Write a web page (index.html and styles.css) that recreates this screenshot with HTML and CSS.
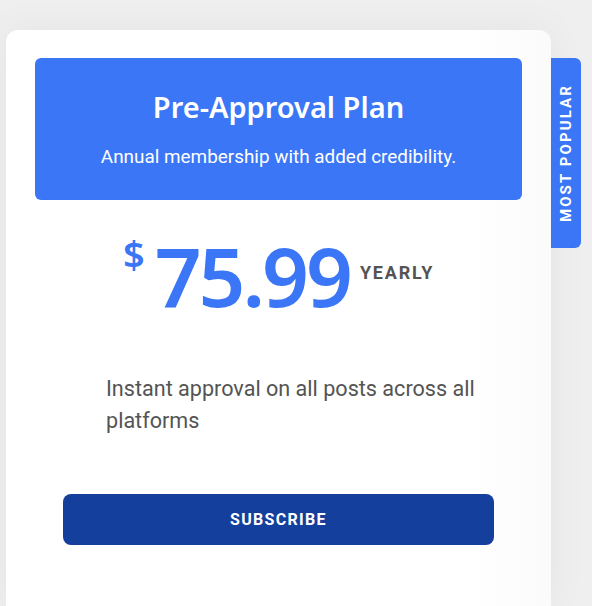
FILE: index.html
```html
<!DOCTYPE html>
<html lang="en">
<head>
<meta charset="utf-8">
<title>Pricing</title>
<link rel="stylesheet" href="styles.css">
</head>
<body>
<div class="page">
  <div class="card">
    <div class="ribbon"><span>MOST POPULAR</span></div>
    <div class="head">
      <h2 class="title">Pre-Approval Plan</h2>
      <p class="sub">Annual membership with added credibility.</p>
    </div>
    <div class="price">
      <span class="cur">$</span>
      <span class="amount">75.99</span>
      <span class="per">YEARLY</span>
    </div>
    <p class="desc">Instant approval on all posts across all platforms</p>
    <button class="btn">SUBSCRIBE</button>
  </div>
</div>
</body>
</html>
```

FILE: styles.css
```css
html, body {
  margin: 0;
  padding: 0;
  background: #efefef;
  height: 100%;
  overflow: hidden;
}
.page {
  padding: 30px 0 0 6px;
}
.card {
  position: relative;
  width: 545px;
  height: 576px;
  background: linear-gradient(to right, #ffffff 85%, #fbfbfb 100%);
  border-radius: 12px 12px 0 0;
  box-shadow: 0 0 40px rgba(0, 0, 0, 0.05);
  padding-top: 28px;
  box-sizing: border-box;
}
.ribbon {
  position: absolute;
  left: 100%;
  top: 28px;
  width: 30px;
  height: 190px;
  background: #3b76f6;
  border-radius: 0 6px 6px 0;
  display: flex;
  align-items: center;
  justify-content: center;
}
.ribbon span {
  writing-mode: vertical-rl;
  transform: rotate(180deg);
  font-family: Roboto, "Liberation Sans", sans-serif;
  font-weight: 700;
  font-size: 15px;
  letter-spacing: 2.1px;
  color: #ffffff;
}
.head {
  margin: 0 29px;
  height: 142px;
  box-sizing: border-box;
  background: #3b76f6;
  border-radius: 6px;
  padding-top: 31px;
  text-align: center;
  color: #ffffff;
}
.title {
  margin: 0;
  font-family: "Noto Sans", "Open Sans", sans-serif;
  font-weight: 600;
  font-size: 29px;
  line-height: 36px;
}
.sub {
  margin: 20px 0 0;
  font-family: Roboto, "Liberation Sans", sans-serif;
  font-size: 18.9px;
  line-height: 24px;
}
.price {
  display: flex;
  justify-content: center;
  align-items: flex-start;
  margin-top: 34px;
  color: #3b76f6;
}
.cur {
  font-family: "Noto Sans", sans-serif;
  font-weight: 600;
  font-size: 38px;
  line-height: 1;
  margin-top: 1px;
  margin-right: 10px;
}
.amount {
  font-family: "Noto Sans", sans-serif;
  font-weight: 600;
  font-size: 82px;
  line-height: 1;
  letter-spacing: -3px;
}
.per {
  font-family: Roboto, "Liberation Sans", sans-serif;
  font-weight: 700;
  font-size: 18px;
  line-height: 1;
  letter-spacing: 1.8px;
  color: #545454;
  margin-top: 30px;
  margin-left: 10px;
}
.desc {
  margin: 57px 50px 0 100px;
  font-family: Roboto, "Liberation Sans", sans-serif;
  font-size: 21.6px;
  line-height: 32px;
  color: #545454;
}
.btn {
  display: block;
  margin: 57px 0 0 57px;
  width: 431px;
  height: 51px;
  border: none;
  border-radius: 8px;
  background: #143f9c;
  color: #ffffff;
  font-family: Roboto, "Liberation Sans", sans-serif;
  font-weight: 700;
  font-size: 16px;
  letter-spacing: 1.3px;
  padding: 0;
}
```
